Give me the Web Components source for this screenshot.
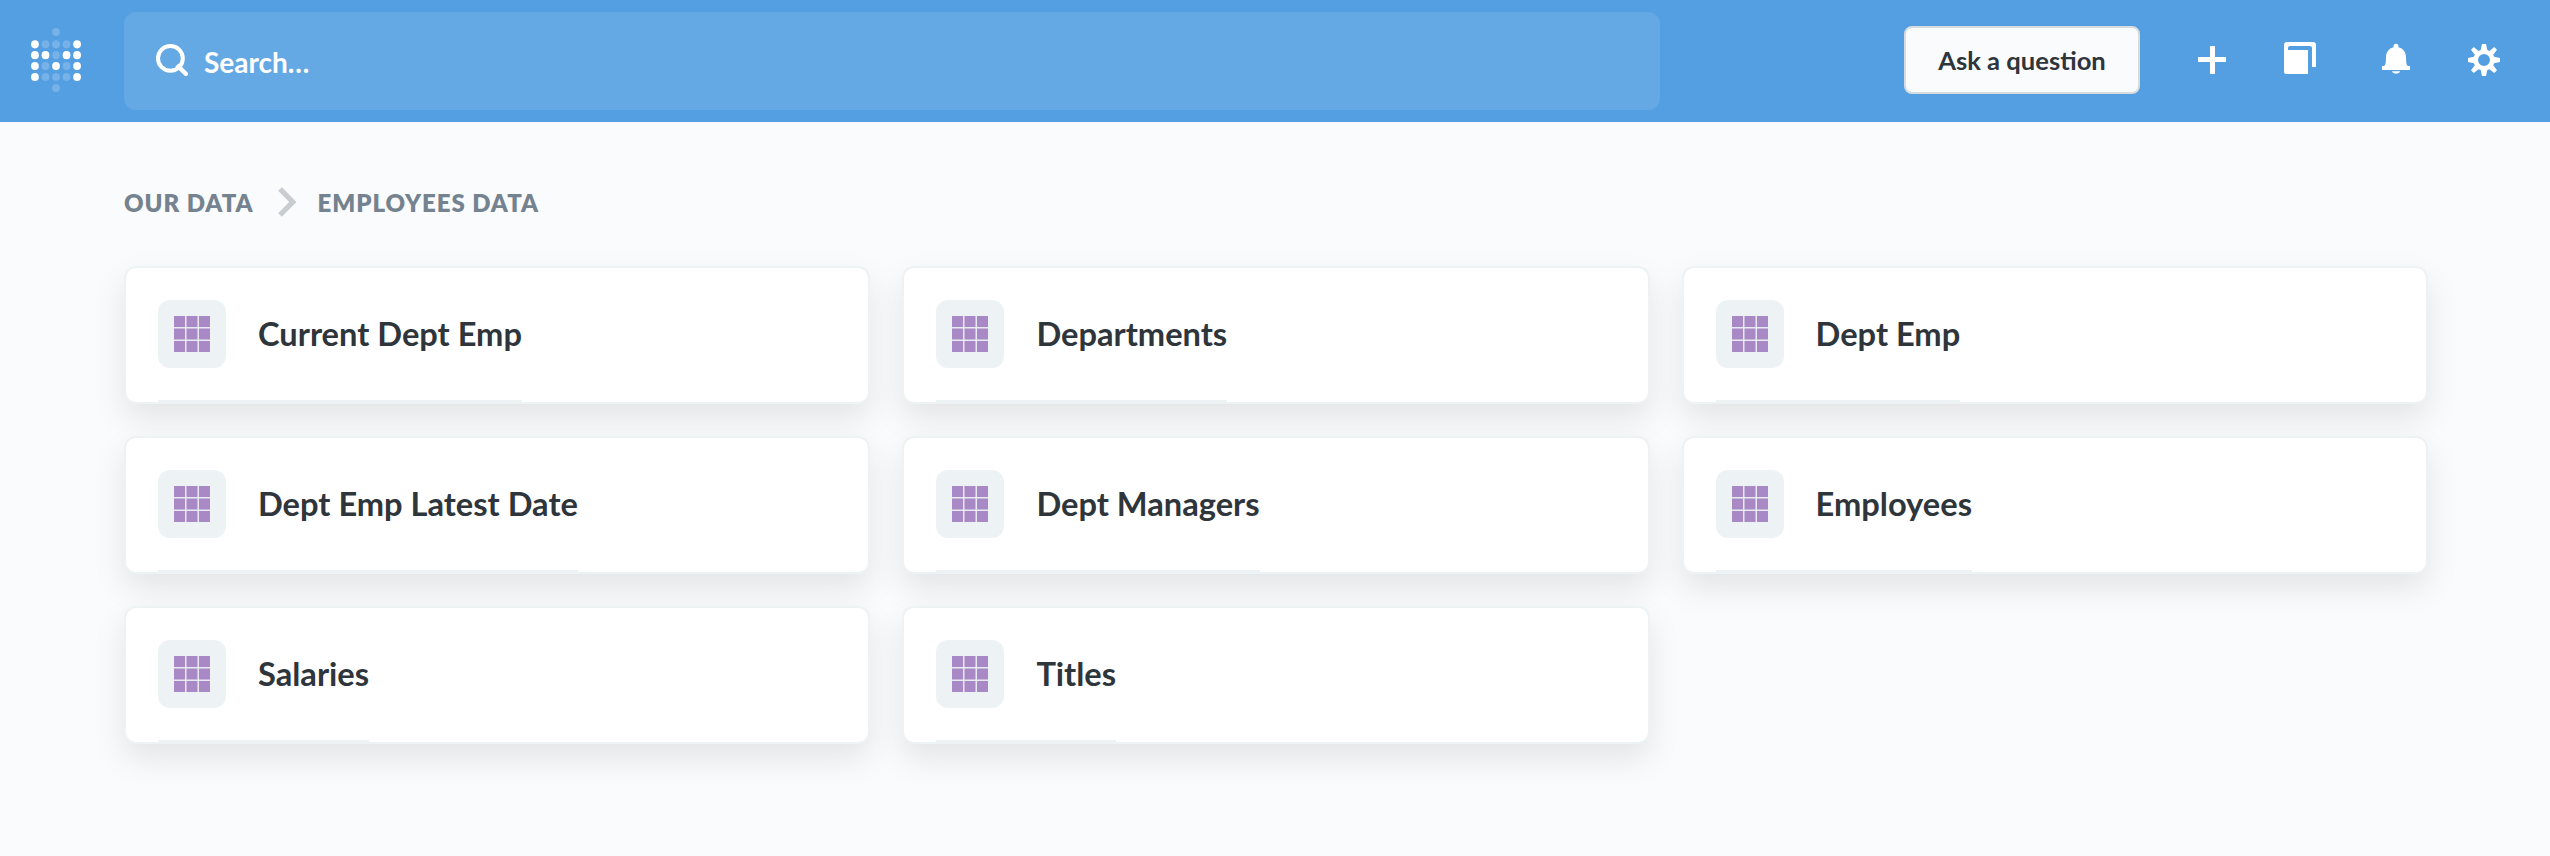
<!DOCTYPE html>
<html lang="en">
<head>
<meta charset="utf-8">
<title>Employees Data</title>
<style>
html,body{margin:0;height:100%}
body{background:#fafbfd;font-family:Lato,"Open Sans",sans-serif;color:#2e353b;overflow:hidden}
</style>
</head>
<body>
<data-browser></data-browser>
<script>
const define = (name, html) => {
  const t = document.createElement('template');
  t.innerHTML = html;
  customElements.define(name, class extends HTMLElement {
    constructor() {
      super();
      this.attachShadow({mode: 'open'}).appendChild(t.content.cloneNode(true));
    }
  });
};

const dots = () => {
  const rows = ['x...x', 'xx.xx', 'x.x.x', 'x...x'];
  const dot = (x, y, on) => `<ellipse cx="${x}" cy="${y}" rx="3.9" ry="4.1" fill="#fff" fill-opacity="${on ? 1 : .2}"/>`;
  let s = dot(25, 4.1, false) + dot(25, 60, false);
  rows.forEach((r, j) => [...r].forEach((c, i) => { s += dot(3.95 + i * 10.53, 16.3 + j * 10.9, c === 'x'); }));
  return s;
};

define('app-logo', `<style>:host{display:block;width:50px;height:64px;margin-bottom:2px}svg{display:block}</style>
<svg width="50" height="64" viewBox="0 0 50 64">${dots()}</svg>`);

define('search-bar', `<style>
:host{display:flex;box-sizing:border-box;align-items:center;width:1536px;height:98px;padding:0 32px;border-radius:12px;background:#64a8e4;color:#fff}
svg{display:block;margin:0 16px 2px 0;flex:none}
span{font-size:28px;line-height:34px;font-weight:700;margin-top:1px}
</style>
<svg width="32" height="32" viewBox="0 0 32 32" fill="none" stroke="#fff" stroke-width="4"><circle cx="14.4" cy="14.4" r="12.4"/><path d="M22.5 22.500l7.300 7.300" stroke-width="4.400" stroke-linecap="square"/></svg>
<span><slot></slot></span>`);

define('primary-button', `<style>
:host{display:flex;box-sizing:border-box;align-items:center;justify-content:center;width:236px;height:68px;border:2px solid #d9dcdf;border-radius:8px;background:#fafbfd;color:#2e353b;font-size:25.6px;line-height:30px;font-weight:700;white-space:nowrap}
</style><span><slot></slot></span>`);

const icons = {
  plus: [28, 28, '<path d="M12 0h5v11.1h11v5H17V28h-5V16.1H0v-5h12z"/>'],
  stack: [32, 32, '<path d="M3 0h26q3 0 3 3v22h-4V6q0-2-2-2H6Q4 4 4 6v2h20v24H2q-2 0-2-2V3q0-3 3-3z"/>'],
  bell: [28, 31, '<path d="M11.7 4.2a2.5 2.5 0 1 1 4.6 0C21.300 5.400 23.800 9 24 14c.2 5 .2 8.700 2.200 9.100H28v3.900H0v-3.900h1.800C3.800 22.700 3.800 19 4 14c.2-5 2.700-8.600 7.700-9.800zM10 28.200h8.200c-.6 1.500-2 2.300-4.100 2.300s-3.500-.8-4.100-2.300z"/>'],
  gear: [32, 32, '<path fill-rule="evenodd" d="M14 0h4l1.300 6.100 2.200.9 4.700-4 2.800 2.700-3.800 5 .9 2.100L32 14v4l-5.900 1.300-.9 2 3.800 5-2.800 2.700-4.700-3.800-2.200.8L18 32h-4l-1.300-6-2.200-.8L5.800 29 3 26.300l3.800-5-.9-2L0 18v-4l5.900-1.200.9-2.100-3.800-5L5.800 3l4.700 4 2.200-.9zM16 10a6 6 0 1 0 0 12 6 6 0 0 0 0-12z"/>']
};
for (const [n, [w, h, p]] of Object.entries(icons))
  define('icon-' + n, `<style>:host{display:block;width:${w}px;height:${h}px}svg{display:block}</style><svg width="${w}" height="${h}" viewBox="0 0 ${w} ${h}" fill="#fff">${p}</svg>`);

define('top-nav', `<style>
:host{display:flex;box-sizing:border-box;align-items:center;height:122px;padding:0 50px 0 31px;background:#549ee2}
search-bar{margin-left:43px}
primary-button{margin:0 58px 2px auto}
icon-plus{margin:0 58px 2px 0}icon-stack{margin:0 66px 6px 0}icon-bell{margin:0 58px 5px 0}icon-gear{margin-bottom:2px}
</style>
<app-logo></app-logo>
<search-bar>Search…</search-bar>
<primary-button>Ask a question</primary-button>
<icon-plus></icon-plus><icon-stack></icon-stack><icon-bell></icon-bell><icon-gear></icon-gear>`);

define('bread-crumbs', `<style>
:host{display:flex;align-items:center;height:32px;color:#74838f;font-size:24px;line-height:32px;font-weight:800;letter-spacing:.96px;text-transform:uppercase}
svg{display:block;margin:0 22px 0 24px;flex:none}
::slotted(span){margin-top:2px}
</style>
<slot name="root"></slot>
<svg width="18" height="30" viewBox="0 0 18 30"><path d="M2 2l12.800 13L2 28" fill="none" stroke="#c7cdd1" stroke-width="5.200"/></svg>
<slot></slot>`);

define('table-card', `<style>
:host{display:flex;box-sizing:border-box;height:138px;padding:0 32px;border:2px solid #edf2f5;border-radius:12px;background:#fff;box-shadow:0 14px 32px rgba(0,0,0,.095)}
.link{display:flex;box-sizing:border-box;align-items:center;height:134px;border-bottom:2px solid #edf2f5}
.box{display:flex;align-items:center;justify-content:center;width:68px;height:68px;border-radius:12px;background:#edf2f5;margin-right:32px}
svg{display:block}
.name{font-size:32.64px;line-height:40px;font-weight:700;white-space:nowrap}
</style>
<div class="link"><div class="box"><svg width="36" height="36" viewBox="0 0 36 36" fill="#a989c5">${[0, 12.46, 24.92].map(y => [0, 12.46, 24.92].map(x => `<rect x="${x}" y="${y}" width="11.080" height="11.080"/>`).join('')).join('')}</svg></div>
<span class="name"><slot></slot></span></div>`);

define('card-grid', `<style>:host{display:grid;grid-template-columns:746.4px 747.2px 746.4px;gap:32px}</style><slot></slot>`);

define('data-browser', `<style>
:host{display:block}
main{padding:64px 122px 0 124px}
card-grid{margin-top:48px}
</style>
<top-nav></top-nav>
<main>
<bread-crumbs><span slot="root">Our data</span><span>Employees Data</span></bread-crumbs>
<card-grid>
<table-card>Current Dept Emp</table-card><table-card>Departments</table-card><table-card>Dept Emp</table-card>
<table-card>Dept Emp Latest Date</table-card><table-card>Dept Managers</table-card><table-card>Employees</table-card>
<table-card>Salaries</table-card><table-card>Titles</table-card>
</card-grid>
</main>`);
</script>
</body>
</html>
